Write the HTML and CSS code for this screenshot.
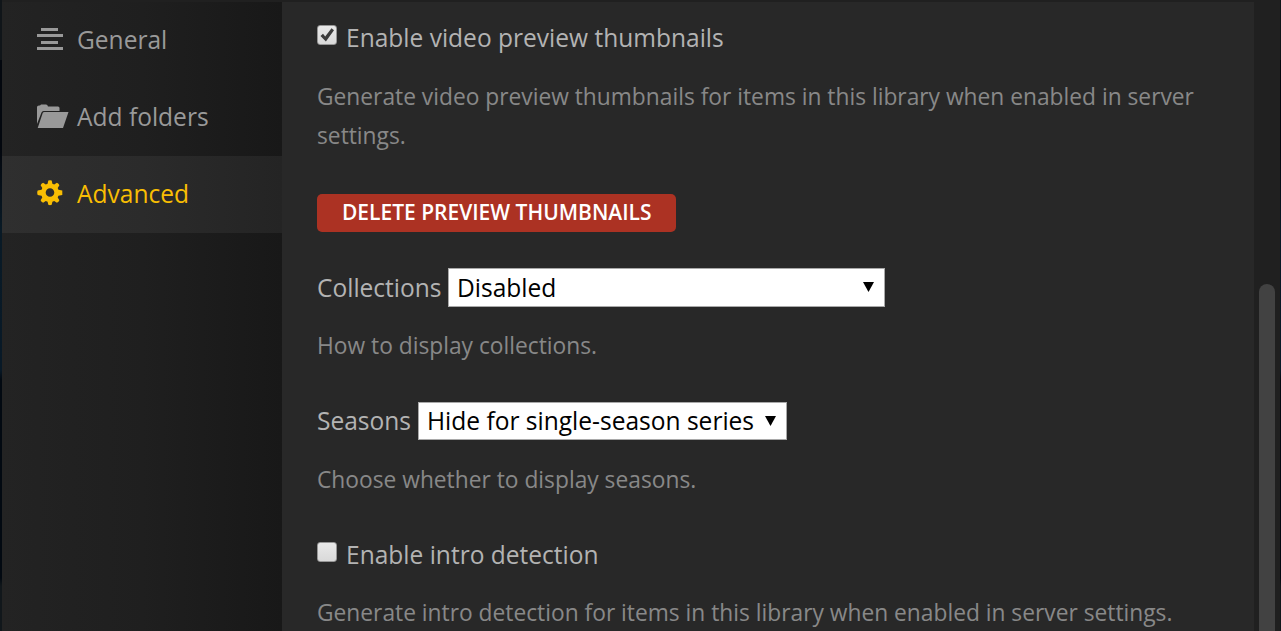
FILE: index.html
```html
<!DOCTYPE html>
<html lang="en">
<head>
<meta charset="utf-8">
<title>Library settings</title>
<link rel="stylesheet" href="styles.css">
</head>
<body>
<div class="modal">
  <nav class="sidebar">
    <a class="nav-item">
      <svg class="nav-icon" width="32" height="32" viewBox="0 0 32 32"><path d="M4 4h17v3H4zM0 10h26v3H0zM4 17h17v3H4zM0 23h26v3H0z"/></svg>
      <span class="nav-text">General</span>
    </a>
    <a class="nav-item">
      <svg class="nav-icon" width="32" height="32" viewBox="0 0 32 32"><path d="M0 23V6q0-1.500 2-1.500h1l1-1h5q1.500 0 2 2h10q1.500 0 1.500 1.500V10H6.500q-1.500 0-2 1.500zM7.500 11H31.500L26 27H.7l5-15q.4-1 1.800-1z"/></svg>
      <span class="nav-text">Add folders</span>
    </a>
    <a class="nav-item active">
      <svg class="nav-icon" width="32" height="32" viewBox="0 0.7 32 32"><path fill-rule="evenodd" d="M11.300 3.300q1.700-.9 3.400 0l.7 3.200 1.800.7 2.700-1.700q1.900.6 2.500 2.500l-1.700 2.700.7 1.800 3.900.8v4.300l-3.900.8-.7 1.800 1.700 2.700q-.6 1.900-2.500 2.500l-2.700-1.700-1.800.7-.7 3q-1.700.9-3.400 0l-.7-3-1.800-.7-2.700 1.700Q4.200 24.800 3.600 22.900l1.700-2.700-.7-1.800-3.900-.8q-1-2.100 0-4.300l3.900-.8.7-1.800L3.600 8Q4.200 6.100 6.100 5.500l2.700 1.700 1.800-.7zM13 10.900a4.300 4.300 0 1 0 0 8.600 4.300 4.300 0 0 0 0-8.600z"/></svg>
      <span class="nav-text">Advanced</span>
    </a>
  </nav>
  <main class="content">
    <label class="row first"><span class="check"><svg width="18" height="18" viewBox="0 0 18 18"><path d="M2.500 10L5 7.800l2.200 2.700L13.500 2.300 16 4.200 7.900 15.400z"/></svg></span><span>Enable video preview thumbnails</span></label>
    <p class="help help-long">Generate video preview thumbnails for items in this library when enabled in server<br>settings.</p>
    <button class="danger">DELETE PREVIEW THUMBNAILS</button>
    <div class="row collections"><span class="label-c">Collections</span><div class="select wide"><span>Disabled</span><svg class="arrow" width="11" height="10" viewBox="0 0 11 10"><path d="M0 0h11L5.500 10z"/></svg></div></div>
    <p class="help">How to display collections.</p>
    <div class="row seasons"><span class="label-s">Seasons</span><div class="select narrow"><span>Hide for single-season series</span><svg class="arrow" width="11" height="10" viewBox="0 0 11 10"><path d="M0 0h11L5.500 10z"/></svg></div></div>
    <p class="help help-seasons">Choose whether to display seasons.</p>
    <label class="row intro"><span class="check"></span><span>Enable intro detection</span></label>
    <p class="help">Generate intro detection for items in this library when enabled in server settings.</p>
  </main>
  <div class="scrollbar"><div class="thumb"></div></div>
</div>
</body>
</html>
```

FILE: styles.css
```css
* { box-sizing: border-box; }
body {
  margin: 0;
  width: 1281px;
  height: 631px;
  overflow: hidden;
  background: linear-gradient(#101519 0 60px, #03070e 60px 150px, #091a26 230px, #081927 370px, #020911 380px 578px, #11171b 586px);
  font-family: "Open Sans", "Noto Sans", sans-serif;
  font-size: 24.540px;
  color: #b3b3b3;
}
.modal {
  display: flex;
  width: 1278px;
  height: 631px;
  margin-left: 2px;
  border-top: 2px solid #202020;
  background: #282828;
}
.sidebar {
  flex: none;
  width: 280px;
  background: linear-gradient(90deg, #232323, #1f1f1f 50%, #181818);
}
.nav-item {
  display: flex;
  align-items: center;
  height: 77px;
  padding: 0 0 1px 35px;
  color: #999;
}
.nav-item.active {
  color: #f9be03;
  background: linear-gradient(90deg, #2f2f2f, #2b2b2b 50%, #242424);
}
.nav-icon {
  flex: none;
  margin-right: 8px;
  fill: currentColor;
}
.nav-text { margin-bottom: 1px; }
.nav-text, .row span, .help { white-space: nowrap; }
.content {
  flex: none;
  width: 972px;
  height: 629px;
  overflow: hidden;
  padding-left: 35px;
}
.row {
  display: flex;
  align-items: center;
  height: 39px;
  line-height: 36px;
}
.row > span:not(.check) { padding-top: 1px; }
.first { margin-top: 16px; }
.check {
  flex: none;
  width: 20px;
  height: 20px;
  margin: -6px 9px 0 0;
  border: 1px solid #969696;
  border-radius: 3px;
  background: linear-gradient(#e9e9e9, #d9d9d9);
  line-height: 0;
}
.check svg { fill: #3c3c3c; }
.help {
  margin: 19px 0 0;
  font-size: 22.780px;
  line-height: 39px;
  color: #888;
}
.help-long { margin-top: 20px; }
.danger {
  display: block;
  width: 359px;
  height: 38px;
  margin-top: 39px;
  padding: 0 0 2px 25px;
  border: 0;
  border-radius: 5px;
  background: #ac3223;
  color: #fff;
  font: 600 20.980px/36px "Open Sans", sans-serif;
  text-align: left;
  white-space: nowrap;
}
.collections { margin-top: 36px; }
.select {
  display: flex;
  align-items: center;
  justify-content: space-between;
  height: 39px;
  padding: 0 10px 0 8px;
  border: 1px solid #a9a9a9;
  background: #fff;
  color: #000;
}
.wide span { margin-top: 1px; }
.narrow span { margin-bottom: 1px; }
.label-c { width: 131px; }
.row > .label-s { width: 101px; padding: 0 0 1px; }
.wide { width: 437px; }
.narrow { width: 369px; height: 38px; }
.arrow { flex: none; margin-top: -2px; }
.narrow .arrow { margin-top: 0; }
.seasons { height: 38px; margin-top: 37px; }
.help-seasons { margin-top: 20px; }
.intro { margin-top: 36px; }
.scrollbar {
  flex: none;
  width: 26px;
  height: 629px;
  padding: 282px 0 0 5px;
  background: #202020;
}
.thumb {
  width: 16px;
  height: 347px;
  border-radius: 8px 8px 0 0;
  background: #424242;
}
```
